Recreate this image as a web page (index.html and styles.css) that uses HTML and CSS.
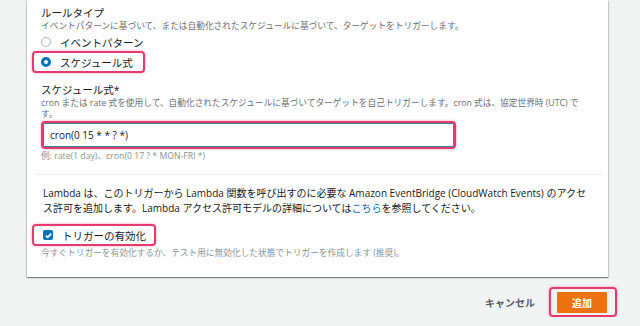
FILE: index.html
```html
<!DOCTYPE html>
<html lang="ja">
<head>
    <meta charset="UTF-8">
    <meta name="viewport" content="width=device-width, initial-scale=1.0">
    <title>トリガーを追加</title>
    <link rel="stylesheet" href="styles.css">
</head>
<body>
    <div class="card">
        <div class="field">
            <div class="field-label">ルールタイプ</div>
            <p class="desc">イベントパターンに基づいて、または自動化されたスケジュールに基づいて、ターゲットをトリガーします。</p>
            <div class="radio-row">
                <span class="radio"></span>
                <span>イベントパターン</span>
            </div>
            <div class="mark mark-radio">
                <div class="radio-row">
                    <span class="radio checked"></span>
                    <span>スケジュール式</span>
                </div>
            </div>
        </div>

        <div class="field">
            <div class="field-label label-schedule">スケジュール式*</div>
            <p class="desc">cron または rate 式を使用して、自動化されたスケジュールに基づいてターゲットを自己トリガーします。cron 式は、協定世界時 (UTC) で<br>す。</p>
            <div class="mark mark-input">
                <div class="input">cron(0 15 * * ? *)</div>
            </div>
            <p class="hint">例: rate(1 day)、cron(0 17 ? * MON-FRI *)</p>
        </div>

        <div class="divider"></div>

        <p class="note">Lambda は、このトリガーから Lambda 関数を呼び出すのに必要な Amazon EventBridge (CloudWatch Events) のアクセ<br>ス許可を追加します。Lambda アクセス許可モデルの詳細については<a href="#">こちら</a>を参照してください。</p>

        <div class="mark mark-check">
            <div class="check-row">
                <span class="checkbox">
                    <svg width="9" height="9" viewBox="0 0 9 9"><path d="M1.8 4.6 L3.7 6.4 L7.2 2.6" fill="none" stroke="#fff" stroke-width="1.6"/></svg>
                </span>
                <span>トリガーの有効化</span>
            </div>
        </div>
        <p class="hint">今すぐトリガーを有効化するか、テスト用に無効化した状態でトリガーを作成します (推奨)。</p>
    </div>

    <div class="actions">
        <button class="btn-cancel">キャンセル</button>
        <div class="mark mark-btn">
            <button class="btn-add">追加</button>
        </div>
    </div>
</body>
</html>
```

FILE: styles.css
```css
/* mise en page generale */
body {
    margin: 0;
    background-color: #f2f3f3;
    font-family: "Open Sans", "Noto Sans CJK JP", sans-serif;
    color: #16191f;
}
.card {
    margin-left: 27px;
    width: 581px;
    height: 277px;
    box-sizing: border-box;
    background-color: #fff;
    padding: 6px 14px 0 14px;
    box-shadow: 0 1px 1px 0 rgba(0, 28, 36, 0.3), 1px 1px 1px 0 rgba(0, 28, 36, 0.15), -1px 1px 1px 0 rgba(0, 28, 36, 0.15);
}
p {
    margin: 0;
}
.field-label {
    font-size: 10.5px;
    line-height: 14px;
}
.label-schedule {
    margin-top: 10px;
}
.desc {
    font-size: 8.7px;
    line-height: 11px;
    color: #687078;
    margin-top: 1px;
}
.field:first-child .desc {
    line-height: 12px;
    margin-top: 0;
}
.hint {
    font-size: 8.7px;
    line-height: 12px;
    color: #879596;
    margin-top: 1px;
}

/* cadres roses (annotations) */
.mark {
    border: 2px solid #e8396e;
    border-radius: 4px;
    box-shadow: 0 0 3px rgba(232, 57, 110, 0.45);
    box-sizing: border-box;
}
.mark-radio {
    display: inline-block;
    margin: -1px 0 0 -9px;
    padding: 1px 10px 1px 7px;
}
.mark-input {
    width: 415px;
    margin-top: 1px;
    padding: 0;
}
.mark-check {
    display: inline-block;
    margin: 8px 0 0 -9px;
    padding: 1px 8px 1px 8px;
}
.mark-btn {
    padding: 3px 8px 2px 6px;
}

/* boutons radio */
.radio-row,
.check-row {
    display: flex;
    align-items: center;
    gap: 9px;
    height: 16px;
    font-size: 10.5px;
}
.radio-row {
    margin-top: 2px;
}
.mark .radio-row {
    margin-top: 0;
}
.check-row {
    height: 16px;
}
.radio {
    width: 10px;
    height: 10px;
    box-sizing: border-box;
    border: 1.5px solid #aab7b8;
    border-radius: 50%;
    background: #fff;
}
.radio.checked {
    border: 3px solid #0073bb;
}
.checkbox {
    width: 10px;
    height: 10px;
    margin-left: 1px;
    border-radius: 2px;
    background-color: #0073bb;
    display: flex;
    align-items: center;
    justify-content: center;
}

/* champ de saisie */
.input {
    height: 22px;
    border: 1.5px solid #2d87a4;
    border-radius: 1px;
    font-size: 10px;
    line-height: 22px;
    padding-left: 6px;
    color: #16191f;
}

.divider {
    height: 1px;
    background-color: #eaeded;
    margin: 12px -8px 0 -6px;
}
.note {
    font-size: 10px;
    line-height: 15px;
    margin-top: 11px;
    padding-left: 2px;
    white-space: nowrap;
}
.note a {
    color: #0073bb;
    text-decoration: none;
}

/* boutons du bas */
.actions {
    display: flex;
    justify-content: flex-end;
    align-items: center;
    margin-top: 10px;
    padding-right: 23px;
}
.btn-cancel {
    background: none;
    border: none;
    font-family: inherit;
    font-size: 10px;
    font-weight: bold;
    color: #545b64;
    margin-right: 14px;
    padding: 0;
}
.btn-add {
    display: block;
    width: 50px;
    height: 21px;
    border: none;
    border-radius: 1px;
    background-color: #ec7211;
    color: #fff;
    font-family: inherit;
    font-size: 10px;
    font-weight: bold;
    padding: 0;
}
```
